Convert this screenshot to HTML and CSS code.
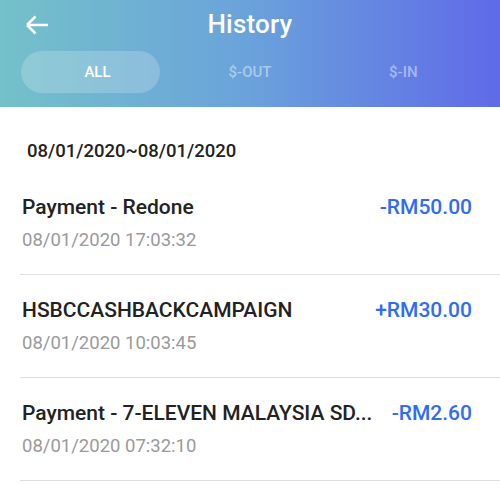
FILE: index.html
```html
<!DOCTYPE html>
<html lang="en">
<head>
    <meta charset="UTF-8">
    <meta name="viewport" content="width=device-width, initial-scale=1.0">
    <title>History</title>
    <link rel="stylesheet" href="styles.css">
</head>
<body>

    <!-- Topo -->
    <header class="top-bar">
        <div class="title-row">
            <button class="back-btn" aria-label="Back">
                <svg width="24" height="20" viewBox="0 0 24 20">
                    <path d="M2 10H23M2 10L10.5 1.5M2 10L10.5 18.5" fill="none" stroke="#fff" stroke-width="2.6"/>
                </svg>
            </button>
            <h1>History</h1>
        </div>
        <nav class="tabs">
            <div class="tab active"><span>ALL</span></div>
            <div class="tab">$-OUT</div>
            <div class="tab">$-IN</div>
        </nav>
    </header>

    <!-- Lista -->
    <main class="history">
        <div class="date-range">08/01/2020~08/01/2020</div>

        <div class="item">
            <div class="item-info">
                <div class="item-name">Payment - Redone</div>
                <div class="item-time">08/01/2020 17:03:32</div>
            </div>
            <div class="item-amount">-RM50.00</div>
        </div>

        <div class="item">
            <div class="item-info">
                <div class="item-name">HSBCCASHBACKCAMPAIGN</div>
                <div class="item-time">08/01/2020 10:03:45</div>
            </div>
            <div class="item-amount">+RM30.00</div>
        </div>

        <div class="item">
            <div class="item-info">
                <div class="item-name">Payment - 7-ELEVEN MALAYSIA SD...</div>
                <div class="item-time">08/01/2020 07:32:10</div>
            </div>
            <div class="item-amount">-RM2.60</div>
        </div>
    </main>

</body>
</html>
```

FILE: styles.css
```css
/* CSS */
body {
    font-family: Roboto, "Noto Sans", Arial, sans-serif;
    background-color: #fff;
    margin: 0;
    color: #222;
}

.top-bar {
    height: 107px;
    background: linear-gradient(to right, #74c1c9 0%, #6aa2db 50%, #5f6ae8 100%);
    color: #fff;
}

.title-row {
    height: 48px;
    display: flex;
    align-items: center;
    justify-content: center;
    position: relative;
}

.title-row h1 {
    margin: 0;
    font-size: 26px;
    font-weight: 500;
    letter-spacing: 0.2px;
}

.back-btn {
    position: absolute;
    left: 25px;
    top: 15px;
    padding: 0;
    border: none;
    background: none;
    display: flex;
}

.tabs {
    display: grid;
    grid-template-columns: repeat(3, 1fr);
    padding: 3px 20px 0;
}

.tab {
    height: 42px;
    display: flex;
    align-items: center;
    justify-content: center;
    font-size: 15px;
    font-weight: 500;
    color: rgba(255, 255, 255, 0.45);
}

.tab.active {
    color: #fff;
    width: 139px;
    margin-left: 1px;
    border-radius: 21px;
    background-color: rgba(255, 255, 255, 0.2);
    box-sizing: border-box;
    padding-left: 14px;
}

.date-range {
    padding: 32px 0 9px 27px;
    font-size: 18.5px;
    font-weight: 500;
    line-height: 24px;
}

.item {
    display: flex;
    align-items: flex-start;
    gap: 16px;
    margin-left: 20px;
    padding: 23px 28px 22px 2px;
    border-bottom: 1px solid #dedede;
}

.item-info {
    flex: 1;
    min-width: 0;
}

.item-name {
    font-size: 21px;
    font-weight: 500;
    line-height: 24px;
    white-space: nowrap;
}

.item-time {
    margin-top: 9px;
    font-size: 18.5px;
    line-height: 24px;
    color: #9a9a9a;
}

.item-amount {
    font-size: 21px;
    font-weight: 500;
    line-height: 24px;
    color: #2f6cf3;
    white-space: nowrap;
}
```
